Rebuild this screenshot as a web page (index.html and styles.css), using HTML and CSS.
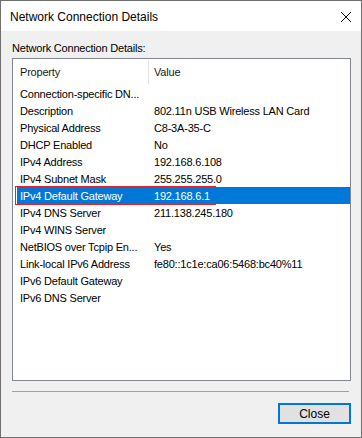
FILE: index.html
```html
<!DOCTYPE html>
<html>
  <head>
    <title>Network Connection Details</title>
    <meta charset="UTF-8" />
    <link rel="stylesheet" href="styles.css">
  </head>

  <body>
    <div class="window">
      <div class="titlebar">
        <span class="title">Network Connection Details</span>
        <svg class="close-x" width="12" height="12" viewBox="0 0 12 12">
          <path d="M1 1 L11 11 M11 1 L1 11" stroke="#000" stroke-width="1" fill="none" />
        </svg>
      </div>
      <div class="content">
        <div class="caption">Network Connection Details:</div>
        <div class="list">
          <div class="list-head">
            <div class="col-prop">Property</div>
            <div class="col-val">Value</div>
          </div>
          <div class="list-body">
            <div class="row"><span class="prop">Connection-specific DN...</span><span class="val"></span></div>
            <div class="row"><span class="prop">Description</span><span class="val">802.11n USB Wireless LAN Card</span></div>
            <div class="row"><span class="prop">Physical Address</span><span class="val">C8-3A-35-C</span></div>
            <div class="row"><span class="prop">DHCP Enabled</span><span class="val">No</span></div>
            <div class="row"><span class="prop">IPv4 Address</span><span class="val">192.168.6.108</span></div>
            <div class="row"><span class="prop">IPv4 Subnet Mask</span><span class="val">255.255.255.0</span></div>
            <div class="row selected"><span class="prop">IPv4 Default Gateway</span><span class="val">192.168.6.1</span><div class="mark"></div></div>
            <div class="row"><span class="prop">IPv4 DNS Server</span><span class="val">211.138.245.180</span></div>
            <div class="row"><span class="prop">IPv4 WINS Server</span><span class="val"></span></div>
            <div class="row"><span class="prop">NetBIOS over Tcpip En...</span><span class="val">Yes</span></div>
            <div class="row"><span class="prop">Link-local IPv6 Address</span><span class="val">fe80::1c1e:ca06:5468:bc40%11</span></div>
            <div class="row"><span class="prop">IPv6 Default Gateway</span><span class="val"></span></div>
            <div class="row"><span class="prop">IPv6 DNS Server</span><span class="val"></span></div>
          </div>
        </div>
        <div class="separator"></div>
        <div class="buttons">
          <button class="btn">Close</button>
        </div>
      </div>
    </div>
  </body>
</html>
```

FILE: styles.css
```css
* {
  box-sizing: border-box;
  margin: 0;
  padding: 0;
}

body {
  width: 362px;
  height: 438px;
  background: #ffffff;
  font-family: "Liberation Sans", Arial, sans-serif;
  color: #000;
}

.window {
  width: 362px;
  height: 438px;
  border: 1px solid #6f6f6f;
  background: #f0f0f0;
  display: flex;
  flex-direction: column;
}

.titlebar {
  height: 30px;
  background: #ffffff;
  display: flex;
  align-items: center;
  justify-content: space-between;
  padding: 0 9px 0 9px;
}

.title {
  font-size: 12px;
  margin-top: 1px;
}

.close-x {
  margin-top: 1px;
}

.content {
  flex: 1;
  display: flex;
  flex-direction: column;
  padding: 10px 10px 0 11px;
  font-size: 11px;
  letter-spacing: -0.2px;
}

.caption {
  height: 17px;
  line-height: 14px;
}

.list {
  height: 323px;
  background: #ffffff;
  border: 1px solid #828790;
  padding: 0 0 0 4px;
}

.list-head {
  height: 26px;
  display: grid;
  grid-template-columns: 131px 1fr;
  align-items: center;
  color: #1a1a1a;
}

.col-prop {
  padding-left: 3px;
}

.col-val {
  height: 24px;
  display: flex;
  align-items: center;
  border-left: 1px solid #e5e5e5;
  padding-left: 5px;
}

.row {
  position: relative;
  height: 17px;
  display: grid;
  grid-template-columns: 133px 1fr;
  align-items: center;
  white-space: nowrap;
}

.prop {
  padding-left: 3px;
}

.val {
  padding-left: 4px;
}

.row.selected {
  background: #0078d7;
  color: #ffffff;
}

.mark {
  position: absolute;
  left: -2px;
  top: -1px;
  width: 201px;
  height: 19px;
  border: 1px solid #e8202a;
}

.separator {
  margin-top: 10px;
  margin-right: 2px;
  height: 1px;
  background: #a0a0a0;
}

.buttons {
  display: flex;
  justify-content: flex-end;
  padding-top: 11px;
}

.btn {
  width: 73px;
  height: 21px;
  background: #e1e1e1;
  border: 2px solid #0078d7;
  font-family: "Liberation Sans", Arial, sans-serif;
  font-size: 12px;
  color: #000;
  outline: none;
}
```
